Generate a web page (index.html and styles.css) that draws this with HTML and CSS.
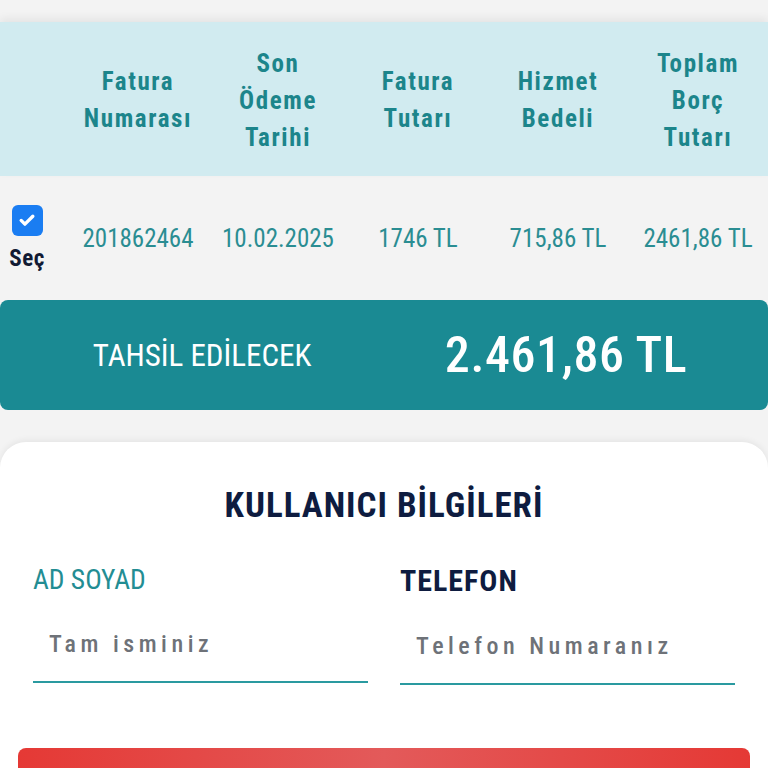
FILE: index.html
```html
<!DOCTYPE html>
<html lang="tr">
<head>
    <title>Fatura Ödeme</title>
    <meta name="viewport" content="width=device-width, initial-scale=1.0">
    <link rel="stylesheet" href="styles.css">
</head>
<body>
    <div id="bills">
        <div class="bill-row bill-head">
            <div class="cell"></div>
            <div class="cell">Fatura<br>Numarası</div>
            <div class="cell">Son<br>Ödeme<br>Tarihi</div>
            <div class="cell">Fatura<br>Tutarı</div>
            <div class="cell">Hizmet<br>Bedeli</div>
            <div class="cell">Toplam<br>Borç<br>Tutarı</div>
        </div>
        <div class="bill-row bill-item">
            <div class="cell select-cell">
                <span class="checkbox">
                    <svg width="20" height="20" viewBox="0 0 24 24"><path d="M5 12.5l4.5 4.5L19 7.5" fill="none" stroke="#fff" stroke-width="4" stroke-linecap="round" stroke-linejoin="round"/></svg>
                </span>
                <span class="select-label">Seç</span>
            </div>
            <div class="cell">201862464</div>
            <div class="cell">10.02.2025</div>
            <div class="cell">1746 TL</div>
            <div class="cell">715,86 TL</div>
            <div class="cell">2461,86 TL</div>
        </div>
    </div>

    <div id="total-bar">
        <div class="total-label">TAHSİL EDİLECEK</div>
        <div class="total-amount">2.461,86 TL</div>
    </div>

    <div id="user-card">
        <h2>KULLANICI BİLGİLERİ</h2>
        <div class="field-grid">
            <div class="field">
                <label class="field-label">AD SOYAD</label>
                <input type="text" placeholder="Tam isminiz">
            </div>
            <div class="field">
                <label class="field-label strong">TELEFON</label>
                <input type="text" placeholder="Telefon Numaranız">
            </div>
        </div>
        <button id="pay-button"></button>
    </div>
</body>
</html>
```

FILE: styles.css
```css
/* General styling */
body {
    margin: 0;
    background: #f3f3f3;
    font-family: Roboto, "Noto Sans", sans-serif;
    font-stretch: 80%;
}

/* Bills table */
#bills {
    padding-top: 22px;
}
.bill-row {
    display: grid;
    grid-template-columns: 68px repeat(5, 140px);
    align-items: center;
}
.cell {
    text-align: center;
}
.bill-head {
    height: 154px;
    background: #d1ebf0;
    box-shadow: 0 -4px 8px rgba(0, 0, 0, 0.06);
    color: #1c858b;
    font-weight: bold;
    font-size: 25px;
    line-height: 37px;
    letter-spacing: 1.6px;
    padding-top: 2px;
    box-sizing: border-box;
}
.bill-item {
    height: 124px;
    color: #2a8d92;
    font-size: 25px;
}
.select-cell {
    display: flex;
    flex-direction: column;
    align-items: center;
    width: 38px;
    margin-left: 8px;
}
.checkbox {
    width: 31px;
    height: 31px;
    border-radius: 6px;
    background: #1a7df2;
    display: flex;
    align-items: center;
    justify-content: center;
}
.select-label {
    margin-top: 9px;
    font-size: 23px;
    font-weight: bold;
    color: #111a33;
    letter-spacing: 0.5px;
}

/* Total */
#total-bar {
    height: 110px;
    background: #1a8a93;
    border-radius: 8px;
    display: flex;
    align-items: center;
    padding: 0 20px;
    color: #fff;
}
.total-label,
.total-amount {
    flex: 1;
    text-align: center;
}
.total-label {
    font-size: 31px;
}
.total-amount {
    font-size: 50px;
    font-weight: 500;
    letter-spacing: 0.6px;
}

/* User card */
#user-card {
    margin-top: 32px;
    background: #fff;
    border-radius: 26px 26px 0 0;
    box-shadow: 0 -2px 6px rgba(0, 0, 0, 0.06);
    padding: 43px 33px 0;
}
#user-card h2 {
    margin: 0;
    text-align: center;
    font-size: 35px;
    font-weight: bold;
    color: #0e1c40;
    letter-spacing: 1px;
}
.field-grid {
    display: grid;
    grid-template-columns: 335px 335px;
    gap: 32px;
    margin-top: 37px;
}
.field-label {
    display: block;
    font-size: 27.5px;
    color: #238d93;
}
.field-label.strong {
    font-weight: bold;
    font-size: 30px;
    color: #0e1c40;
    letter-spacing: 1px;
}
input[type="text"] {
    display: block;
    width: 100%;
    box-sizing: border-box;
    margin-top: 26px;
    padding: 8px 16px 23px;
    border: none;
    border-bottom: 2px solid #2a9aa0;
    background: transparent;
    font-family: inherit;
    font-stretch: 80%;
    font-size: 24px;
    outline: none;
}
input[type="text"]::placeholder {
    color: #6e7278;
    font-weight: 500;
    letter-spacing: 4.5px;
}
#pay-button {
    display: block;
    width: 732px;
    height: 20px;
    margin: 63px 0 0 -15px;
    border: none;
    border-radius: 8px 8px 0 0;
    background: linear-gradient(to right, #e53935, #e35a5a 50%, #e53935);
}
```
